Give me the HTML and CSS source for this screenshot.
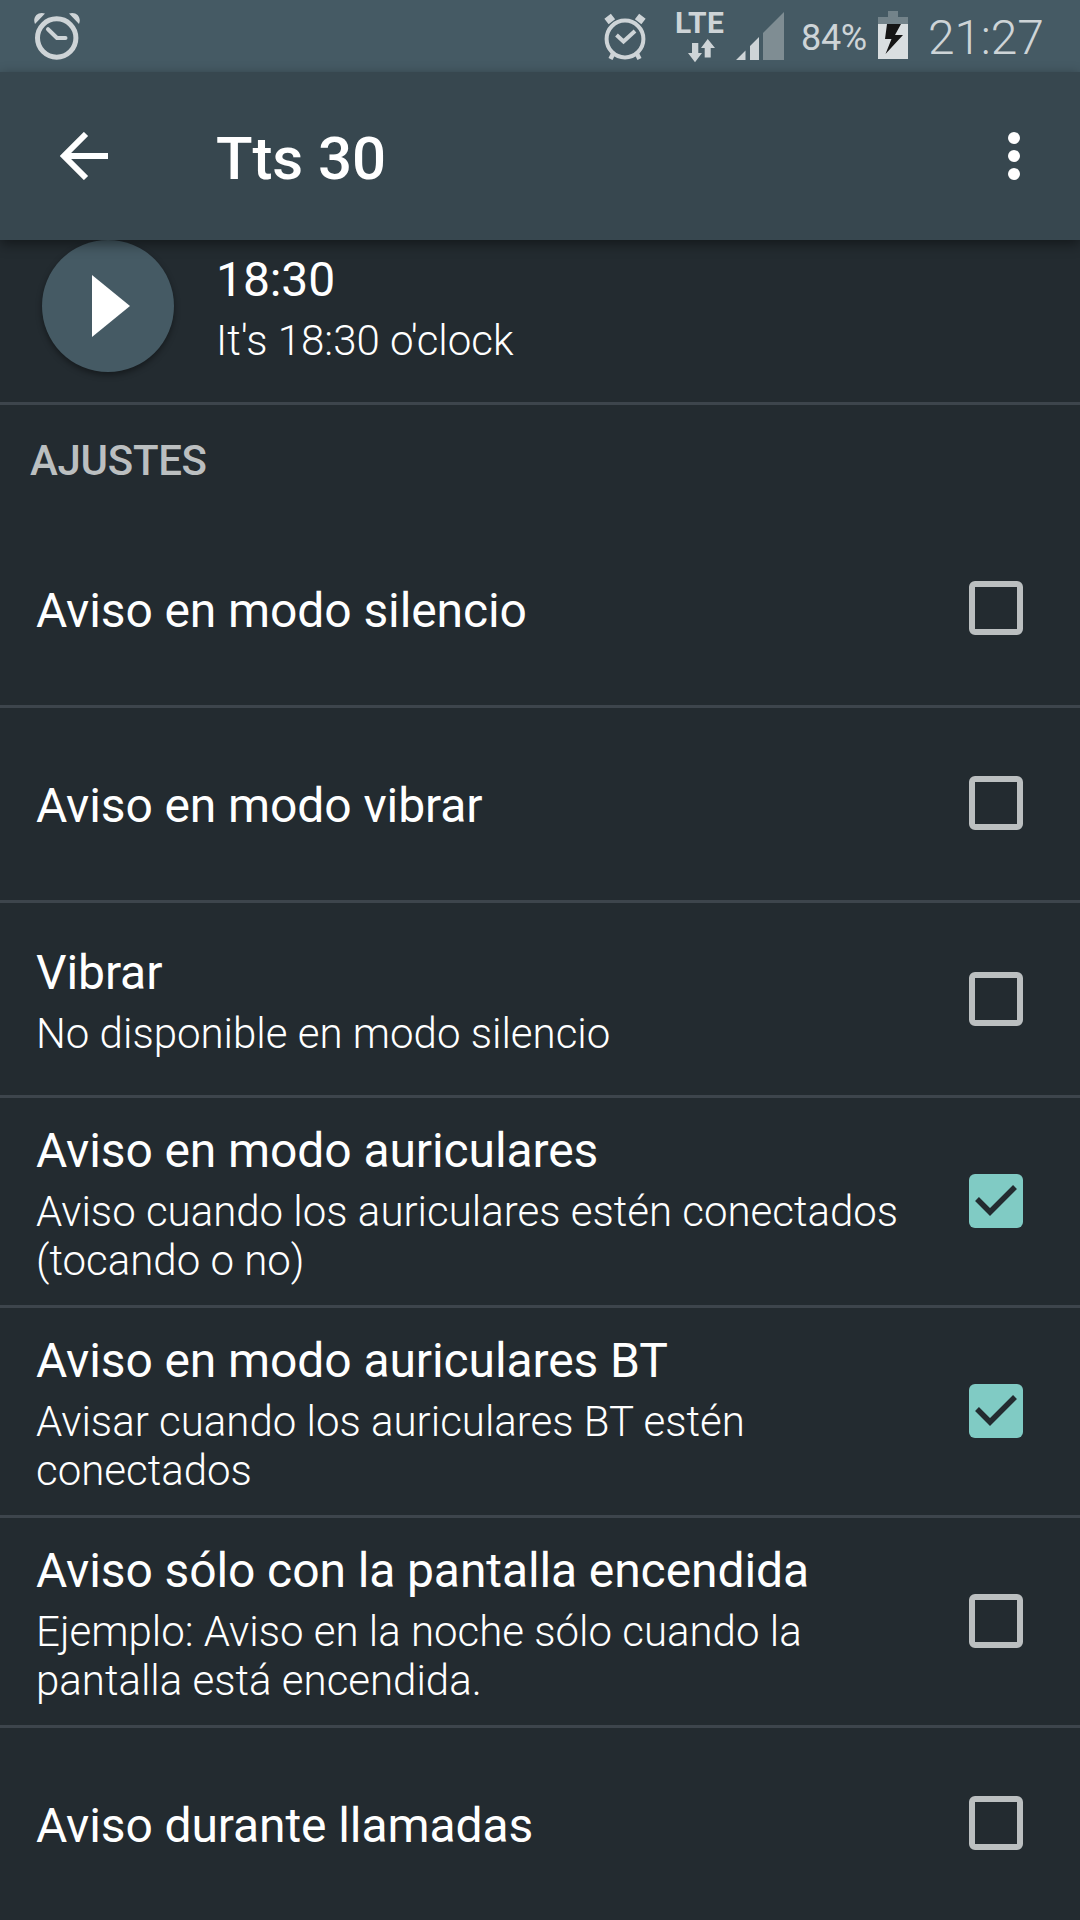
FILE: index.html
```
<!DOCTYPE html>
<html lang="es">
<head>
  <meta charset="UTF-8" />
  <meta name="viewport" content="width=device-width, initial-scale=1.0"/>
  <title>Tts 30</title>
  <link rel="stylesheet" href="styles.css">
</head>
<body>

  <!-- Status bar -->
  <div class="status-bar">
    <svg class="clock-icon" width="48" height="48" viewBox="0 0 48 48">
      <circle cx="23.7" cy="26" r="19.2" fill="none" stroke="currentColor" stroke-width="5"/>
      <path d="M15 17.2L24 26H32.5" fill="none" stroke="currentColor" stroke-width="4" stroke-linecap="round" stroke-linejoin="round"/>
      <path d="M2 12C-1 5 5-1 12 1.500L2 12Z M46 12C49 5 43-1 36 1.500L46 12Z" fill="currentColor"/>
    </svg>

    <div class="status-right">
      <svg class="alarm-icon" width="44" height="48" viewBox="0 0 44 48">
        <circle cx="22" cy="26" r="18.400" fill="none" stroke="currentColor" stroke-width="4"/>
        <path d="M13.500 22L20.500 28.500L32 18" fill="none" stroke="currentColor" stroke-width="4"/>
        <path d="M10 41L7.500 46M34 41L36.500 46" fill="none" stroke="currentColor" stroke-width="4.500"/>
        <path d="M3.500 8.500L10 3.500M40.500 8.500L34 3.500" fill="none" stroke="currentColor" stroke-width="7" stroke-linejoin="round"/>
      </svg>
      <div class="network">
        <span>LTE</span>
        <svg width="27" height="24" viewBox="0 0 27 24">
          <path d="M4 4H10.300V14H14L7 23.300L0 14H4Z M16.700 18.500H22.700V9H27L19.700 0L13 9H16.700Z" fill="currentColor"/>
        </svg>
      </div>
      <svg class="signal-icon" width="48" height="48" viewBox="0 0 48 48">
        <path d="M0 48L9.500 38.500V48Z M14 48V34L23 25V48Z" fill="currentColor"/>
        <path d="M27 48V21L48 0V48Z" fill="#7f8d93"/>
      </svg>
      <span class="battery-level">84%</span>
      <svg class="battery-icon" width="30" height="48" viewBox="0 0 30 48">
        <path d="M10 0H20V6H30V13H0V6H10Z" fill="#73838a"/>
        <path d="M0 13H30V48H0Z" fill="#d9dee0"/>
        <path d="M9 13H23L17 24H25L7.500 43L13.500 28H7Z" fill="#151515"/>
      </svg>
      <span class="time">21:27</span>
    </div>
  </div>

  <!-- App bar -->
  <header class="app-bar">
    <svg class="back-icon" width="48" height="48" viewBox="0 0 48 48">
      <path d="M26 2L4 24L26 46M4 24H48" fill="none" stroke="currentColor" stroke-width="6"/>
    </svg>
    <h1>Tts 30</h1>
    <svg class="menu-icon" width="12" height="48" viewBox="0 0 12 48">
      <circle cx="6" cy="6" r="6"/>
      <circle cx="6" cy="24" r="6"/>
      <circle cx="6" cy="42" r="6"/>
    </svg>
  </header>

  <!-- Preview -->
  <section class="preview">
    <button class="play">
      <svg width="38" height="62" viewBox="0 0 38 62">
        <path d="M0 0L38 31L0 62Z" fill="#fff"/>
      </svg>
    </button>
    <div class="text">
      <p class="name">18:30</p>
      <p class="detail">It's 18:30 o'clock</p>
    </div>
  </section>

  <h2>AJUSTES</h2>

  <!-- Settings -->
  <ul class="settings">
    <li>
      <div class="text">
        <p class="name">Aviso en modo silencio</p>
      </div>
      <span class="checkbox"></span>
    </li>
    <li>
      <div class="text">
        <p class="name">Aviso en modo vibrar</p>
      </div>
      <span class="checkbox"></span>
    </li>
    <li class="two-line">
      <div class="text">
        <p class="name">Vibrar</p>
        <p class="detail">No disponible en modo silencio</p>
      </div>
      <span class="checkbox"></span>
    </li>
    <li class="tall">
      <div class="text">
        <p class="name">Aviso en modo auriculares</p>
        <p class="detail">Aviso cuando los auriculares estén conectados (tocando o no)</p>
      </div>
      <span class="checkbox checked">
        <svg width="54" height="54" viewBox="0 0 54 54"><path d="M8 25L21 38L46 13" fill="none" stroke="#232b30" stroke-width="5.500"/></svg>
      </span>
    </li>
    <li class="tall">
      <div class="text">
        <p class="name">Aviso en modo auriculares BT</p>
        <p class="detail">Avisar cuando los auriculares BT estén conectados</p>
      </div>
      <span class="checkbox checked">
        <svg width="54" height="54" viewBox="0 0 54 54"><path d="M8 25L21 38L46 13" fill="none" stroke="#232b30" stroke-width="5.500"/></svg>
      </span>
    </li>
    <li class="tall">
      <div class="text">
        <p class="name">Aviso sólo con la pantalla encendida</p>
        <p class="detail">Ejemplo: Aviso en la noche sólo cuando la pantalla está encendida.</p>
      </div>
      <span class="checkbox"></span>
    </li>
    <li>
      <div class="text">
        <p class="name">Aviso durante llamadas</p>
      </div>
      <span class="checkbox"></span>
    </li>
  </ul>

</body>
</html>
```
FILE: styles.css
```
* {
  margin: 0;
  padding: 0;
  box-sizing: border-box;
}

body {
  font-family: Roboto, "Noto Sans", sans-serif;
  background-color: #232b30;
  color: #fff;
  height: 1920px;
  overflow: hidden;
}

svg {
  display: block;
  flex-shrink: 0;
}

/* Status bar */
.status-bar {
  height: 72px;
  background-color: #455a64;
  color: #ced4d7;
  display: flex;
  justify-content: space-between;
  padding: 0 34px 0 33px;
}

.clock-icon {
  margin-top: 12px;
}

.status-right {
  display: flex;
  align-items: flex-start;
}

.alarm-icon {
  margin-top: 13px;
  margin-right: 28px;
}

.network {
  width: 50px;
  margin-right: 11px;
  padding-top: 12px;
}

.network span {
  display: block;
  font-size: 30px;
  font-weight: 700;
  line-height: 22px;
  height: 27px;
  letter-spacing: 0.2px;
}

.network svg {
  margin-left: 13px;
}

.signal-icon {
  margin-top: 12px;
  margin-right: 17px;
}

.battery-level {
  width: 70px;
  font-size: 36px;
  line-height: 42px;
  letter-spacing: -0.3px;
  margin-top: 17px;
}

.battery-icon {
  margin-top: 11px;
  margin-right: 20px;
  margin-left: 7px;
}

.time {
  width: 118px;
  font-size: 48px;
  font-weight: 350;
  line-height: 56px;
  letter-spacing: -0.2px;
  margin-top: 10px;
}

/* App bar */
.app-bar {
  height: 168px;
  background-color: #37474f;
  display: flex;
  align-items: center;
  padding: 0 60px;
  position: relative;
  box-shadow: 0 4px 12px rgba(0, 0, 0, 0.45);
}

.app-bar h1 {
  flex: 1;
  margin-left: 108px;
  padding-top: 4px;
  font-size: 60px;
  font-weight: 500;
  letter-spacing: -0.1px;
}

.menu-icon {
  fill: #fff;
}

/* Preview row */
.preview {
  height: 165px;
  border-bottom: 3px solid #3d454c;
  display: flex;
  align-items: flex-start;
  padding-left: 42px;
}

.play {
  width: 132px;
  height: 132px;
  border: none;
  border-radius: 50%;
  background: #455a64;
  box-shadow: 0 3px 6px rgba(0, 0, 0, 0.4);
  padding-left: 50px;
}

.preview .text {
  margin-left: 42px;
  padding-top: 12px;
}

.name {
  font-size: 48px;
  line-height: 56px;
  letter-spacing: -0.1px;
}

.detail {
  font-size: 42px;
  font-weight: 300;
  line-height: 49px;
  margin-top: 5px;
  padding-top: 3px;
}

h2 {
  height: 108px;
  padding-left: 30px;
  font-size: 42px;
  font-weight: 500;
  line-height: 112px;
  letter-spacing: -0.3px;
  color: #bbbfc0;
}

/* Settings list */
.settings {
  list-style: none;
}

.settings li {
  height: 195px;
  border-bottom: 3px solid #3d454c;
  display: flex;
  align-items: center;
  padding: 0 57px 0 36px;
}

.settings .tall {
  height: 210px;
}

.settings li:last-child {
  border-bottom: none;
  height: 192px;
}

.settings .text {
  flex: 1;
  padding-top: 4px;
  padding-right: 40px;
}

.checkbox {
  width: 54px;
  height: 54px;
  margin-bottom: 2px;
  border: 6px solid #bbbfc0;
  border-radius: 6px;
}

.two-line .checkbox {
  margin-bottom: 0;
}

.checked {
  border: none;
  background-color: #80cbc4;
}
```
